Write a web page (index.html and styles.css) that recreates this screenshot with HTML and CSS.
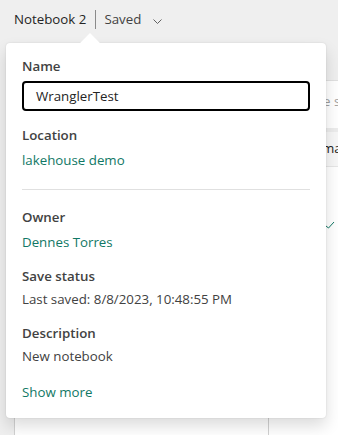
FILE: index.html
```html
<!DOCTYPE html>
<html lang="en">
<head>
  <meta charset="UTF-8"/>
  <meta name="viewport" content="width=device-width, initial-scale=1.0"/>
  <title>Notebook 2</title>
  <link rel="stylesheet" href="styles.css">
</head>
<body>

  <!-- Title bar -->
  <div class="topbar">
    <span class="doc-name">Notebook 2</span>
    <span class="sep"></span>
    <span class="doc-status">Saved</span>
    <svg class="chevron" width="9" height="5" viewBox="0 0 9 5"><path d="M0.5 0.5 L4.5 4.5 L8.5 0.5" fill="none" stroke="#616161" stroke-width="1"/></svg>
  </div>

  <!-- Workspace behind the flyout -->
  <div class="workspace">
    <div class="gutter"></div>
    <div class="canvas"></div>
    <div class="side">
      <div class="side-search">Type search</div>
      <div class="side-row">map</div>
      <div class="side-list">
        <svg class="check" width="10" height="8" viewBox="0 0 10 8"><path d="M1 5 L3.5 7 L9 1" fill="none" stroke="#117865" stroke-width="1"/></svg>
      </div>
    </div>
  </div>

  <!-- Details flyout -->
  <div class="flyout">
    <div class="beak"></div>

    <div class="label">Name</div>
    <div class="name-input">WranglerTest</div>

    <div class="label gap">Location</div>
    <a class="link">lakehouse demo</a>

    <div class="divider"></div>

    <div class="label">Owner</div>
    <a class="link">Dennes Torres</a>

    <div class="label gap">Save status</div>
    <div class="value">Last saved: 8/8/2023, 10:48:55 PM</div>

    <div class="label gap">Description</div>
    <div class="value">New notebook</div>

    <a class="link more">Show more</a>
  </div>

</body>
</html>
```

FILE: styles.css
```css
body {
  margin: 0;
  background: #efefef;
  font-family: "Segoe UI", "Open Sans", Arial, sans-serif;
  font-size: 13.3px;
  color: #242424;
  height: 435px;
  overflow: hidden;
}

.topbar {
  height: 80px;
  display: flex;
  align-items: flex-start;
  padding: 8px 0 0 14px;
  box-sizing: border-box;
}
.doc-name { line-height: 22px; }
.sep {
  width: 1px;
  height: 19px;
  background: #8a8a8a;
  margin: 2px 8px 0 9px;
}
.doc-status { line-height: 22px; color: #424242; }
.chevron { margin: 11px 0 0 12px; }

.workspace {
  display: flex;
  height: 355px;
}
.gutter { flex: none; width: 14px; }
.canvas {
  flex: none;
  width: 253px;
  background: #fff;
  border-left: 1px solid #d1d1d1;
  border-right: 1px solid #d1d1d1;
}
.side {
  flex: 1;
  min-width: 0;
  display: flex;
  flex-direction: column;
  background: #fff;
  border-top: 1px solid #e0e0e0;
  overflow: hidden;
}
.side-search {
  height: 47px;
  line-height: 40px;
  padding-left: 32px;
  color: #9e9e9e;
  white-space: nowrap;
  border-bottom: 4px solid #ececec;
}
.side-row {
  height: 34px;
  line-height: 32px;
  background: #f7f7f7;
  padding-left: 53px;
  color: #242424;
  white-space: nowrap;
  border-bottom: 1px solid #e6e6e6;
}
.side-list { flex: 1; padding: 48px 0 0 56px; }

.flyout {
  position: absolute;
  left: 6px;
  top: 43px;
  width: 320px;
  height: 375px;
  box-sizing: border-box;
  background: #fff;
  border-radius: 4px;
  box-shadow: 0 8px 16px rgba(0,0,0,0.14), 0 0 2px rgba(0,0,0,0.12);
  padding: 13px 16px 0 16px;
}
.beak {
  position: absolute;
  left: 77px;
  top: -7px;
  width: 14px;
  height: 14px;
  background: #fff;
  transform: rotate(45deg);
}

.label {
  position: relative;
  font-weight: 600;
  color: #424242;
  line-height: 20px;
}
.label.gap { margin-top: 14px; }

.name-input {
  margin-top: 5px;
  height: 30px;
  box-sizing: border-box;
  border: 2px solid #000;
  border-radius: 4px;
  padding: 0 12px;
  line-height: 26px;
  color: #242424;
}

.link {
  display: block;
  color: #117865;
  line-height: 20px;
  margin-top: 5px;
}
.value {
  color: #424242;
  line-height: 20px;
  margin-top: 3px;
}
.divider {
  height: 1px;
  background: #e0e0e0;
  margin: 19px 0 17px 0;
}
.link.more { margin-top: 16px; }
```
